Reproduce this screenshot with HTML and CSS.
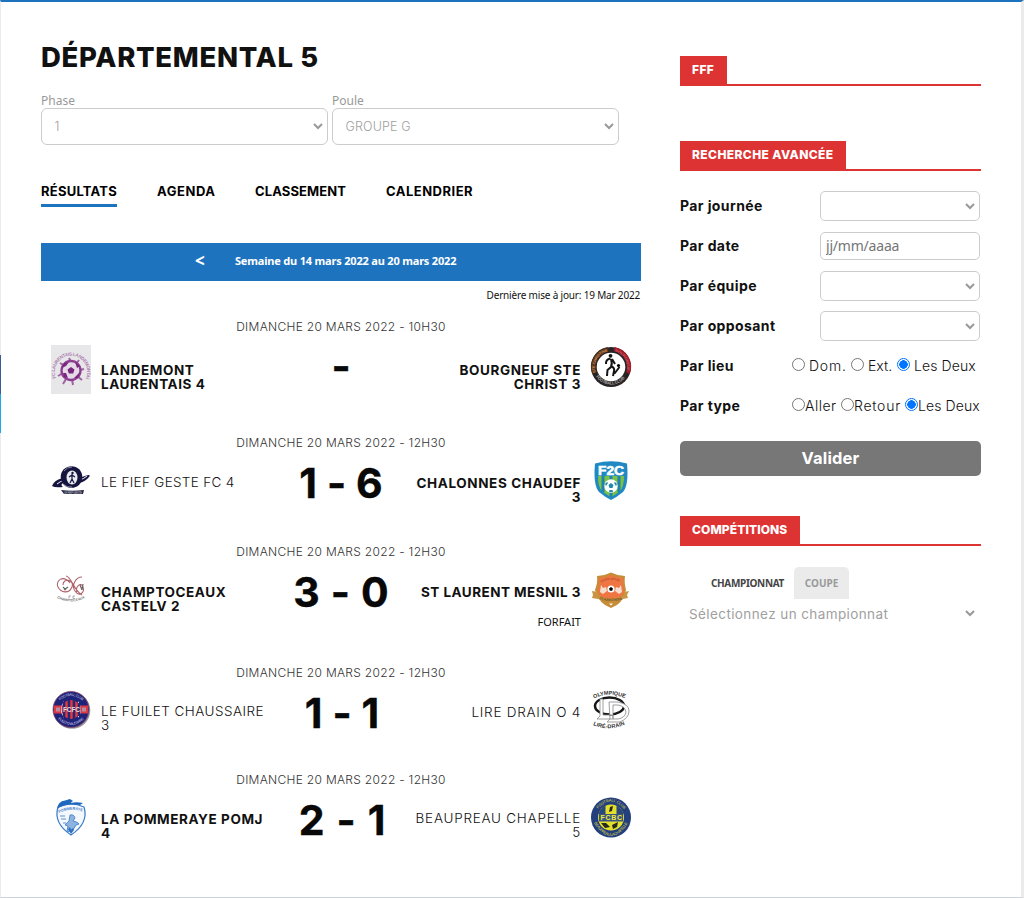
FILE: index.html
```html
<!DOCTYPE html>
<html lang="fr">
<head>
<meta charset="utf-8">
<title>Départemental 5</title>
<link rel="stylesheet" href="styles.css">
</head>
<body>
<div class="share"><span class="share-fb"></span><span class="share-tw"></span></div>
<div class="page">
  <main class="main">
    <h1 class="title">DÉPARTEMENTAL 5</h1>
    <div class="filters">
      <div class="filter">
        <label class="filter-label">Phase</label>
        <div class="select select-lg"><select><option>1</option></select><svg viewBox="0 0 10 7"><path d="M1 1l4 4 4-4"/></svg></div>
      </div>
      <div class="filter">
        <label class="filter-label">Poule</label>
        <div class="select select-lg"><select><option>GROUPE G</option></select><svg viewBox="0 0 10 7"><path d="M1 1l4 4 4-4"/></svg></div>
      </div>
    </div>
    <nav class="tabs">
      <a class="tab tab-active">RÉSULTATS</a>
      <a class="tab tab-agenda">AGENDA</a>
      <a class="tab tab-ranking">CLASSEMENT</a>
      <a class="tab tab-calendar">CALENDRIER</a>
    </nav>
    <div class="week"><span class="week-prev">&lt;</span><span class="week-label">Semaine du 14 mars 2022 au 20 mars 2022</span></div>
    <p class="updated">Dernière mise à jour: 19 Mar 2022</p>

    <div class="matches">
      <section class="match match-pending">
        <div class="date">DIMANCHE 20 MARS 2022 - 10H30</div>
        <div class="row">
          <svg class="logo logo-tall" viewBox="0 0 40 49">
            <rect width="40" height="49" fill="#e7e6e8"/>
            <path id="arc1" d="M5 33A16.200 16.200 0 1 1 35 33" fill="none"/>
            <text font-size="4.600" font-weight="700" fill="#b07fb2" textLength="66"><textPath href="#arc1">FC LAURENTAIS LANDEMONTAIS</textPath></text>
            <path d="M9 18l5 3M18 13l2 4M28 15l-3 4M33 24l-4 1M31 35l-5-4M22 40l-1-6M12 39l3-5M7 31l5-3" stroke="#a064a3" stroke-width="2"/>
            <circle cx="20" cy="25.500" r="9.500" fill="#e4dbe7" stroke="#8d3e91" stroke-width="2.300"/>
            <path d="M20 22l3.500 2.500-1.300 4h-4.400L16.500 24.500zM13 18l5-1-3 4-4 2zM24 17l5 4-3 2zM29 27l-2 6-4 0zM12 28l3 0 2 5-4-1z" fill="#7a2580"/>
          </svg>
          <div class="team team-win">LANDEMONT<br>LAURENTAIS 4</div>
          <div class="score"><span>-</span></div>
          <div class="team team-away team-win">BOURGNEUF STE<br>CHRIST 3</div>
          <svg class="logo logo-low" viewBox="0 0 40 40">
            <circle cx="20" cy="20" r="20" fill="#292424"/>
            <path d="M3 26A18 18 0 0 1 17 2" fill="none" stroke="#4b3020" stroke-width="4"/>
            <path d="M23 2A18 18 0 0 1 37 26" fill="none" stroke="#9c1c2b" stroke-width="4"/>
            <circle cx="20" cy="20" r="14.300" fill="#fff"/>
            <path id="arc2" d="M5 25.500A15.800 15.800 0 0 1 17 4.500" fill="none"/>
            <text font-size="4" font-weight="700" fill="#db8a43" textLength="27"><textPath href="#arc2">STE CHRISTINE</textPath></text>
            <path id="arc2b" d="M24 4.700A15.800 15.800 0 0 1 35 25.500" fill="none"/>
            <text font-size="4" font-weight="700" fill="#d3525c" textLength="24"><textPath href="#arc2b">BOURGNEUF</textPath></text>
            <path id="arc3" d="M5 29.500A18 18 0 0 0 35 29.500" fill="none"/>
            <text font-size="4.200" font-weight="700" fill="#aaa" textLength="33"><textPath href="#arc3">FOOTBALL CLUB</textPath></text>
            <circle cx="19.500" cy="8.800" r="1.900" fill="#151515"/>
            <path d="M19.500 11.500q-5 1-4.500 5.500M20 12q1.500 5 0 8l-3.500 3-.5 6M20 19q4 2 3 5l-1 5M21 12l3 5M28.500 20l-5 6.500" fill="none" stroke="#151515" stroke-width="2"/>
            <circle cx="27.500" cy="18.500" r="1.600"/>
          </svg>
        </div>
      </section>

      <section class="match">
        <div class="date">DIMANCHE 20 MARS 2022 - 12H30</div>
        <div class="row">
          <svg class="logo" viewBox="0 0 40 40">
            <path d="M1 25Q3 19 12 17L31 16Q41 12 38 16Q34 21 28 22L12 22Q9 24 12 26Q4 27 1 25z" fill="#14143f"/>
            <path d="M6 23Q9 20 14 19.500M28 19Q33 18 36 15" stroke="#fff" fill="none"/>
            <circle cx="20.500" cy="16" r="10.800" fill="#14143f"/>
            <ellipse cx="21" cy="16.500" rx="5.500" ry="7" fill="#e8eaf0"/>
            <circle cx="21.500" cy="12" r="1.200" fill="#14143f"/>
            <path d="M21 13v5l-2 4M21 18l2 4M18 16l3-2 3 2" stroke="#14143f" stroke-width="1.200" fill="none"/>
            <path d="M13 10q3-4 8-4M12 23q4 4 9 3" stroke="#aab" fill="none" stroke-width=".8"/>
            <path d="M10 29q11 1.500 23 0l-1 4H13z" fill="#252549"/>
            <text x="13" y="32.500" font-size="3" fill="#bbb" textLength="18">LE FIEF GESTE</text>
          </svg>
          <div class="team team-up">LE FIEF GESTE FC 4</div>
          <div class="score score-a"><span>1</span><span>-</span><span>6</span></div>
          <div class="team team-away team-win">CHALONNES CHAUDEF<br>3</div>
          <svg class="logo" viewBox="0 0 40 40">
            <path d="M4 2.500Q20-2 36 2.500Q38 24 32 31Q26 36 20 39Q14 36 8 31Q2 24 4 2.500z" fill="#2089c3"/>
            <path d="M7 15h26q0 11-4 15-5 4-9 6-4-2-9-6-4-4-4-15z" fill="#7cc142"/>
            <path d="M12 15v16M20 15v21M28 15v16" stroke="#1f83b3" stroke-width="3"/>
            <path d="M6 3.500h28v11H6z" fill="#2089c3"/>
            <text x="7" y="13.500" font-size="13" font-weight="900" fill="#fff" stroke="#fff" stroke-width=".6" textLength="26" lengthAdjust="spacingAndGlyphs">F2C</text>
            <circle cx="20" cy="25" r="6.700" fill="#fff"/>
            <path d="M20 22l2.500 2-1 3h-3l-1-3zM14 23l2-2 1 1-2 3zM26 23l-2-2-1 1 2 3zM18 31l.500-2h3l.500 2z" fill="#2089b0"/>
          </svg>
        </div>
      </section>

      <section class="match">
        <div class="date">DIMANCHE 20 MARS 2022 - 12H30</div>
        <div class="row">
          <svg class="logo" viewBox="0 0 40 40">
            <path d="M19 13C12 4 4 11 7 17S18 24 21 17 12 7 12 15M15 6C21 7 22 20 31 25M31 7C25 7 20 15 24 21S34 23 32 17 24 17 26 22" fill="none" stroke="#b0626a" stroke-width="1.100"/>
            <path d="M12 17l3 3M13 20l4-3M29 15l2 5M32 14l-1 6" stroke="#666" stroke-width="1.200"/>
            <path id="arc4" d="M6 28Q20 35 34 28" fill="none"/>
            <text font-size="3.500" font-weight="700" fill="#777" textLength="29"><textPath href="#arc4">CHAMPTOCEAUX</textPath></text>
            <path d="M18 26h2M18 26v2.500M24 26h-2v2.500h2" stroke="#888" stroke-width=".7" fill="none"/>
          </svg>
          <div class="team team-win">CHAMPTOCEAUX<br>CASTELV 2</div>
          <div class="score score-b"><span>3</span><span>-</span><span>0</span></div>
          <div class="team team-away team-win team-long">ST LAURENT MESNIL 3<small class="note">FORFAIT</small></div>
          <svg class="logo" viewBox="0 0 40 40">
            <path d="M6 6Q13 6 20 2.500Q27 6 34 6Q33 12 35 20Q32 34 20 38Q8 34 4 20Q7 12 6 6z" fill="#c78c37"/>
            <path d="M8 8Q14 8 20 5Q26 8 32 8Q31 14 33 20L31 26Q20 31 9 26L7 20Q9 14 8 8z" fill="#ef7643"/>
            <path d="M1 21l6 1v4q13 5 26 0v-4l5-1-2 4 1 3-5 1q-12 5-25 0l-6-1 1-3z" fill="#c99543"/>
            <path d="M10 15l2 3 3-1 1 4-4 3-3-2zM30 15l-2 3-3-1-1 4 4 3 3-2z" fill="#f5ddd0"/>
            <circle cx="20" cy="19" r="3.600" fill="#fff"/><path d="M20 17l2 1.500-.800 2.300h-2.400L18 18.500z"/>
            <path id="arc11" d="M10 12.500Q20 7 30 12.500" fill="none"/>
            <text font-size="2.800" fill="#8a3b20" textLength="19"><textPath href="#arc11">ASSOCIATION</textPath></text>
            <path id="arc12" d="M8 29Q20 33 32 29" fill="none"/>
            <text font-size="3.200" fill="#4b3518" textLength="24"><textPath href="#arc12">ST LAURENT MESNIL</textPath></text>
            <path d="M18 33.500h4l-2 2z" fill="#fff"/>
          </svg>
        </div>
      </section>

      <section class="match match-tight">
        <div class="date">DIMANCHE 20 MARS 2022 - 12H30</div>
        <div class="row">
          <svg class="logo" viewBox="0 0 40 40">
            <circle cx="21" cy="19.500" r="18.300" fill="#999"/>
            <circle cx="20" cy="18.500" r="18" fill="#1f2279" stroke="#8a4a6a" stroke-width=".8"/>
            <path d="M3 14.500h34v8H3z" fill="#dd3944"/>
            <path d="M5 16.500h4v4H5zM31 16.500h4v4h-4z" fill="#b98aa0"/>
            <path d="M13 10q-6 8.500 0 17zM27 10q6 8.500 0 17z" fill="#f0f0f4"/>
            <circle cx="20" cy="18.500" r="9.500" fill="#e33a40"/>
            <path d="M13 11v15M18 9v19M23 9v19M28 12v13" stroke="#252774" stroke-width="2.600"/>
            <text x="12" y="21" font-size="6.500" font-weight="700" fill="#ddd" textLength="17">FCFC</text>
            <path id="arc5" d="M9 9.500Q20 0 31 9.500" fill="none"/>
            <text font-size="3.600" fill="#c9cbe5" textLength="25"><textPath href="#arc5">FOOTBALL CLUB</textPath></text>
            <path id="arc6" d="M7 28Q20 40 33 28" fill="none"/>
            <text font-size="3.600" fill="#c9cbe5" textLength="29"><textPath href="#arc6">FUILET CHAUSSAIRE</textPath></text>
          </svg>
          <div class="team team-up team-long">LE FUILET CHAUSSAIRE<br>3</div>
          <div class="score score-c"><span>1</span><span>-</span><span>1</span></div>
          <div class="team team-away">LIRE DRAIN O 4</div>
          <svg class="logo" viewBox="0 0 40 40">
            <path id="arc7" d="M3 7.500Q18 0 35 7.500" fill="none"/>
            <text font-size="5.500" font-weight="900" fill="#333" textLength="32"><textPath href="#arc7">OLYMPIQUE</textPath></text>
            <ellipse cx="18.500" cy="15" rx="14.500" ry="8.500" fill="none" stroke="#171717" stroke-width="2.500"/>
            <path d="M9 8h3v16h10v4H6l3-3zM18 11h9q11 2 11 9t-9 11H16l3-3zM22 14v14h5q7-1 8-7-1-6-8-7z" fill="#fff" stroke="#888" stroke-width=".8" fill-rule="evenodd"/>
            <path id="arc8" d="M2 34Q18 41 35 33" fill="none"/>
            <text font-size="5.500" font-weight="900" fill="#333" textLength="33"><textPath href="#arc8">LIRÉ-DRAIN</textPath></text>
          </svg>
        </div>
      </section>

      <section class="match match-tight">
        <div class="date">DIMANCHE 20 MARS 2022 - 12H30</div>
        <div class="row">
          <svg class="logo" viewBox="0 0 40 40">
            <path d="M7 9Q20 3 33 9Q38 25 20 37Q2 25 7 9z" fill="#f4f8fd" stroke="#3a7bc8" stroke-width="1.200"/>
            <path d="M6 11Q7 3 14 2.500l5-1.500 3 2q-2 1-2 2 5-1.500 12 0l-3 2Q14 5 6 11z" fill="#1f68be"/>
            <path id="arc13" d="M8 15Q20 9 32 14" fill="none"/>
            <text font-size="4" font-weight="700" fill="#4a82cb" textLength="24" lengthAdjust="spacingAndGlyphs"><textPath href="#arc13">POMMERAYE</textPath></text>
            <path d="M9 18h5M10 21h5M12 25h3M19 17q4-1 5 3l-2 3q5 1 6 3l-3 1-3 5-3-1-1 3-2-1 1-5-3-1 4-4z" fill="#8db3e0" stroke="#4a83c8" stroke-width=".9"/>
            <path d="M17 31l2-2 1 3 2-2 1 2-3 4z" fill="#2f70c0"/>
          </svg>
          <div class="team team-win">LA POMMERAYE POMJ<br>4</div>
          <div class="score score-d"><span>2</span><span>-</span><span>1</span></div>
          <div class="team team-away team-up">BEAUPREAU CHAPELLE<br>5</div>
          <svg class="logo" viewBox="0 0 40 40">
            <circle cx="20" cy="19.500" r="20" fill="#233f7c"/>
            <circle cx="20" cy="19.500" r="13" fill="#e4df2c"/>
            <path d="M7.500 16a13 13 0 0 1 7-8.500V16zM25.500 7.500a13 13 0 0 1 7 8.500h-7z" fill="#294779"/>
            <path d="M18 14l1-5 3-1-1 5zM10 25l5 0 4 4-5 1zM21 27l6-3-1 5-4 2z" fill="#26291c"/>
            <path d="M8 16h24v7.500H8z" fill="#3a5580"/>
            <text x="9.500" y="22.300" font-size="7" font-weight="700" fill="#f1ea3b" textLength="21.500">FCBC</text>
            <path id="arc9" d="M7 11Q20-4 33 11" fill="none"/>
            <text font-size="3.900" fill="#ddd54a" textLength="31"><textPath href="#arc9">FOOTBALL CLUB</textPath></text>
            <path id="arc10" d="M3 25Q20 51 37 25" fill="none"/>
            <text font-size="3.900" fill="#ddd54a" textLength="44"><textPath href="#arc10">BEAUPREAU LA CHAPELLE</textPath></text>
          </svg>
        </div>
      </section>
    </div>
  </main>

  <aside class="side">
    <div class="heading heading-fff"><h2>FFF</h2></div>
    <div class="heading heading-search"><h2>RECHERCHE AVANCÉE</h2></div>
    <form class="form">
      <div class="field"><label>Par journée</label><div class="select"><select></select><svg viewBox="0 0 10 7"><path d="M1 1l4 4 4-4"/></svg></div></div>
      <div class="field"><label>Par date</label><input class="date-input" type="text" placeholder="jj/mm/aaaa"></div>
      <div class="field"><label>Par équipe</label><div class="select"><select></select><svg viewBox="0 0 10 7"><path d="M1 1l4 4 4-4"/></svg></div></div>
      <div class="field"><label>Par opposant</label><div class="select"><select></select><svg viewBox="0 0 10 7"><path d="M1 1l4 4 4-4"/></svg></div></div>
      <div class="field"><label>Par lieu</label><div class="radios radios-spaced">
        <input type="radio" name="lieu"><span class="w-dom">Dom.</span><input type="radio" name="lieu"><span class="w-ext">Ext.</span><input type="radio" name="lieu" checked><span class="w-both">Les Deux</span></div></div>
      <div class="field"><label>Par type</label><div class="radios">
        <input type="radio" name="type"><span class="w-go">Aller</span><input type="radio" name="type"><span class="w-ret">Retour</span><input type="radio" name="type" checked><span class="w-both">Les Deux</span></div></div>
      <button class="submit" type="button">Valider</button>
    </form>
    <div class="heading heading-comp"><h2>COMPÉTITIONS</h2></div>
    <div class="comp-tabs"><span class="comp-tab comp-current">CHAMPIONNAT</span><span class="comp-tab comp-other">COUPE</span></div>
    <div class="select select-plain"><select><option>Sélectionnez un championnat</option></select><svg viewBox="0 0 10 7"><path d="M1 1l4 4 4-4"/></svg></div>
  </aside>
</div>
</body>
</html>
```
FILE: styles.css
```css
* { box-sizing: border-box; }
body {
  margin: 0;
  height: 898px;
  overflow: hidden;
  background: #fff;
  border-top: 2px solid #1e73be;
  border-left: 1px solid #ebebeb;
  border-right: 3px solid #ebebeb;
  border-bottom: 1px solid #ccd3da;
  font-family: Inter, "Liberation Sans", sans-serif;
  color: #111;
}
.share { position: absolute; left: 0; top: 355px; display: grid; grid-template-rows: 39px 39px; width: 1px; }
.share-fb { background: #3b5998; }
.share-tw { background: #1dabe8; }
.page { display: grid; grid-template-columns: 600px 301px; column-gap: 39px; padding-left: 40px; }

.title { margin: 37px 0 0; padding-top: 1px; height: 34px; font-size: 27.500px; line-height: 34px; font-weight: 800; letter-spacing: .7px; white-space: nowrap; }
.filters { display: flex; gap: 4px; margin-top: 20px; }
.filter { width: 287px; }
.filter-label { display: block; height: 15px; line-height: 15px; font-family: "Noto Sans", sans-serif; font-size: 12px; color: #999; }
.select { display: grid; align-items: center; width: 160px; height: 30px; border: 1px solid #ccc; border-radius: 5px; color: #a0a0a0; }
.select select { grid-area: 1 / 1; width: 100%; height: 100%; appearance: none; border: 0; background: none; color: inherit; font: inherit; padding: 0; letter-spacing: inherit; }
.select svg { grid-area: 1 / 1; justify-self: end; width: 10px; height: 7px; margin-right: 4px; pointer-events: none; fill: none; stroke: #999; stroke-width: 2; }
.select-lg { width: 287px; height: 37px; border-radius: 6px; font-size: 12.500px; font-weight: 300; letter-spacing: .15px; }
.select-lg select { padding-left: 12.500px; }

.tabs { display: flex; gap: 40px; margin-top: 36px; }
.tab { width: 76px; height: 26px; line-height: 21px; font-size: 13px; font-weight: 700; color: #000; white-space: nowrap; letter-spacing: .23px; }
.tab-active { border-bottom: 3px solid #1e73be; }
.tab-agenda { width: 58px; letter-spacing: .55px; }
.tab-ranking { width: 91px; letter-spacing: .1px; }
.tab-calendar { width: 87px; letter-spacing: .5px; }
.week { display: flex; align-items: center; height: 38px; padding-bottom: 3px; margin-top: 36px; background: #1e73be; color: #fff; font-family: "Noto Sans", sans-serif; font-weight: 700; font-size: 11px; letter-spacing: -.19px; }
.week-prev { width: 40px; margin-left: 154px; padding-top: 1px; font-size: 17px; line-height: 20px; }
.updated { margin: 7px 0 0; height: 16px; line-height: 15px; padding-right: 1px; text-align: right; font-family: "Noto Sans", sans-serif; font-size: 10px; letter-spacing: -.18px; }

.matches { display: grid; grid-template-rows: 116px 109px 121px 107px 100px; margin-top: 15px; }
.date { height: 16px; line-height: 16px; text-align: center; font-size: 12px; font-weight: 300; color: #333; letter-spacing: .3px; }
.row { display: grid; grid-template-columns: 40px 175px 110px 175px 40px; column-gap: 10px; width: 580px; margin: 10px 0 0 10px; }
.logo { width: 40px; height: 40px; display: block; overflow: visible; }
.logo-tall { height: 49px; }
.logo-low { margin-top: 2px; }
.logo text { font-family: "Liberation Sans", sans-serif; }
.team { padding-top: 15px; line-height: 14px; font-size: 13.500px; font-weight: 300; letter-spacing: .32px; white-space: nowrap; }
.team-long { letter-spacing: .46px; }
.team-win { font-weight: 700; letter-spacing: .58px; }
.team-away { text-align: right; letter-spacing: .75px; }
.team-win.team-away { letter-spacing: .6px; }
.team-win.team-long { letter-spacing: .46px; }
.match-pending .team { padding-top: 18px; }
.match-tight .team { padding-top: 14px; }
.team.team-up { padding-top: 14px; }
.match-tight .team.team-up { padding-top: 13px; }
.note { display: block; margin-top: 16px; font-size: 11px; font-weight: 400; letter-spacing: 0; font-family: "Noto Sans", sans-serif; }
.score { display: flex; justify-content: center; gap: 10px; height: 46px; line-height: 44px; font-size: 41px; font-weight: 700; color: #080808; -webkit-text-stroke: .4px #080808; }
.match-pending .score { line-height: 42px; }
.score-b { gap: 11px; }
.score-c { padding-left: 2px; }
.score-d { gap: 12px; padding-left: 2px; }

.heading { border-bottom: 2px solid #dd3333; height: 30px; }
.heading h2 { display: inline-block; height: 28px; margin: 0; padding-left: 12px; background: #dd3333; color: #fff; font-size: 12px; line-height: 27px; font-weight: 800; letter-spacing: .4px; white-space: nowrap; vertical-align: top; }
.heading-fff { margin-top: 54px; }
.heading-fff h2 { width: 47px; }
.heading-search { margin-top: 55px; }
.heading-search h2 { width: 166px; }
.heading-comp { margin-top: 40px; }
.heading-comp h2 { width: 120px; letter-spacing: .1px; }
.form { margin-top: 15px; }
.field { display: flex; align-items: center; justify-content: space-between; height: 40px; padding-right: 1px; }
.field label { padding-bottom: 1px; font-size: 14px; font-weight: 700; letter-spacing: .4px; }
.date-input { width: 160px; height: 28px; padding: 0 5px 2px; border: 1px solid #ccc; border-radius: 5px; font: 14px "Noto Sans", sans-serif; letter-spacing: -.2px; }
.date-input::placeholder { color: #757575; }
.radios { display: flex; align-items: center; width: 188px; padding-bottom: 1px; font-size: 14px; font-weight: 300; white-space: nowrap; }
.radios input { appearance: none; flex: none; width: 13px; height: 13px; margin: -2px 0 0; border: 1px solid #767676; border-radius: 50%; }
.radios input:checked { border-color: #0075ff; background: radial-gradient(circle, #0075ff 4px, #fff 4.500px); }
.radios span { flex: none; }
.radios-spaced span { padding-left: 4px; }
.radios .w-dom { width: 46px; letter-spacing: .8px; }
.radios .w-ext { width: 33px; }
.radios .w-go { width: 36px; letter-spacing: .5px; }
.radios .w-ret { width: 51px; letter-spacing: .75px; }
.radios .w-both { width: 62px; letter-spacing: .1px; }
.submit { display: block; width: 301px; height: 35px; margin-top: 15px; padding-bottom: 2px; border: 0; border-radius: 5px; background: #777; color: #fff; font: 700 16.500px Inter, sans-serif; letter-spacing: .15px; }
.comp-tabs { display: flex; margin: 21px 0 0 20px; height: 32px; font: 700 10px/33px "Noto Sans", sans-serif; }
.comp-tab { text-align: center; }
.comp-current { width: 94px; padding-left: 1px; color: #444; letter-spacing: -.32px; }
.comp-other { width: 55px; background: #ebebeb; color: #999; border-radius: 5px 5px 0 0; }
.select-plain { width: 300px; height: 29px; border: 0; font-size: 13.500px; letter-spacing: .4px; }
.select-plain select { padding-left: 9px; }
.select-plain svg { margin-right: 5px; }
```
